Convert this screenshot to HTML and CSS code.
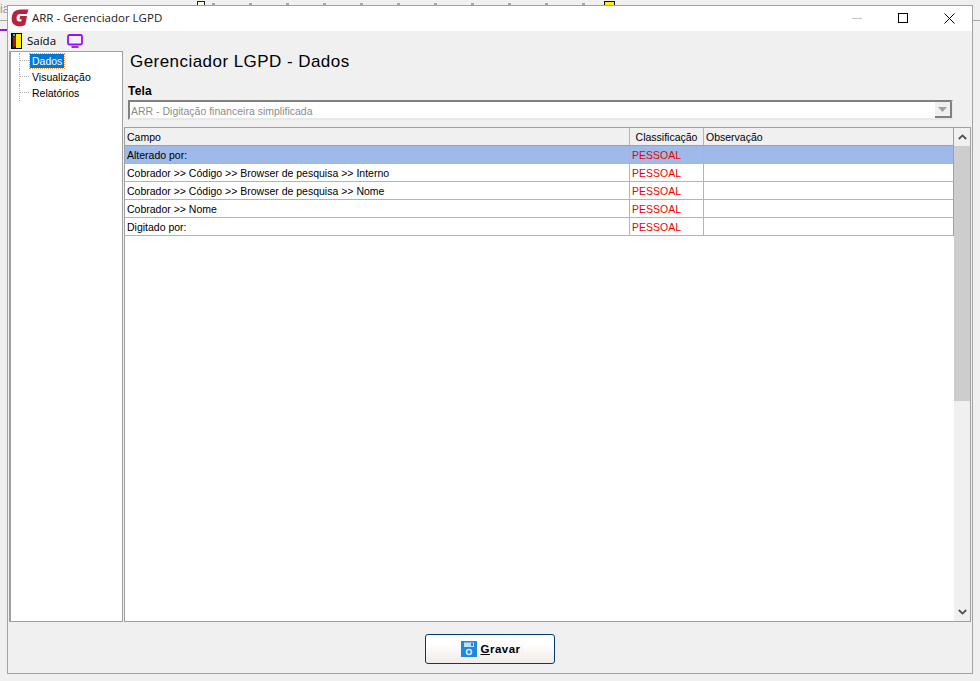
FILE: index.html
```html
<!DOCTYPE html>
<html lang="pt">
<head>
<meta charset="utf-8">
<title>ARR - Gerenciador LGPD</title>
<link rel="stylesheet" href="styles.css">
</head>
<body>
<div class="backdrop" aria-hidden="true">
  <span class="bg-text">ia</span>
  <span class="bg-line bg-line-l"></span>
  <span class="bg-line bg-line-r"></span>
  <span class="bg-purple"></span>
  <span class="bg-doc"></span>
  <span class="bg-door"></span>
  <span class="bg-strip"></span>
</div>
<main class="window">
  <header class="titlebar">
    <svg class="app-icon" viewBox="0 0 18 18" width="18" height="18">
      <path d="M9 .6H17.500L16 5H9.200Q6.200 5 5.600 8.200 5.200 12.400 8.400 12.600H10.200L10.700 10.200H8.400L9.200 7H16L14.300 15.800Q12 17.400 8.400 17.400 .4 17.200 .6 9 1 1 9 .6Z" fill="#b5233f"/>
    </svg>
    <span class="title">ARR - Gerenciador LGPD</span>
    <div class="win-controls">
      <span class="win-btn"><span class="win-min"></span></span>
      <span class="win-btn"><span class="win-max"></span></span>
      <span class="win-btn">
        <svg viewBox="0 0 11 11" width="11" height="11"><path d="M.5.5l10 10M10.5.5l-10 10" stroke="#000" stroke-width="1" fill="none"/></svg>
      </span>
    </div>
  </header>

  <div class="toolbar">
    <span class="tool">
      <svg class="door" viewBox="0 0 11 16" width="11" height="16">
        <rect x=".5" y=".5" width="10" height="15" fill="#ffee00" stroke="#000"/>
        <path d="M1 1h4v14H1z" fill="#151515"/>
        <path d="M2 4l3-1v10l-3 2z" fill="#a01818"/>
        <rect x="2" y="1" width="2" height="2" fill="#19c8e0"/>
      </svg>
      <span class="tool-label">Saída</span>
    </span>
    <svg class="monitor" viewBox="0 0 16 14" width="16" height="14">
      <rect x="1" y="1" width="14" height="9.500" rx="1.500" fill="#f4f0fa" stroke="#9a10e8" stroke-width="1.800"/>
      <path d="M4.500 13h7" stroke="#9a10e8" stroke-width="1.800"/>
    </svg>
  </div>

  <div class="content">
    <nav class="tree">
      <div class="tree-item"><span class="tree-dash"></span><span class="tree-label selected">Dados</span></div>
      <div class="tree-item"><span class="tree-dash"></span><span class="tree-label">Visualização</span></div>
      <div class="tree-item"><span class="tree-dash"></span><span class="tree-label">Relatórios</span></div>
    </nav>

    <section class="main">
      <h1 class="heading">Gerenciador LGPD - Dados</h1>
      <label class="field-label">Tela</label>
      <div class="combo">
        <span class="combo-text">ARR - Digitação financeira simplificada</span>
        <span class="combo-btn"><svg viewBox="0 0 9 5" width="9" height="5"><path d="M0 0h9L4.500 5z" fill="#a0a0a0"/></svg></span>
      </div>

      <div class="grid-wrap">
        <div class="grid">
          <div class="row head">
            <div class="cell c1">Campo</div>
            <div class="cell c2 center">Classificação</div>
            <div class="cell c3">Observação</div>
          </div>
          <div class="row active">
            <div class="cell c1">Alterado por:</div>
            <div class="cell c2 tag">PESSOAL</div>
            <div class="cell c3"></div>
          </div>
          <div class="row">
            <div class="cell c1">Cobrador &gt;&gt; Código &gt;&gt; Browser de pesquisa &gt;&gt; Interno</div>
            <div class="cell c2 tag">PESSOAL</div>
            <div class="cell c3"></div>
          </div>
          <div class="row">
            <div class="cell c1">Cobrador &gt;&gt; Código &gt;&gt; Browser de pesquisa &gt;&gt; Nome</div>
            <div class="cell c2 tag">PESSOAL</div>
            <div class="cell c3"></div>
          </div>
          <div class="row">
            <div class="cell c1">Cobrador &gt;&gt; Nome</div>
            <div class="cell c2 tag">PESSOAL</div>
            <div class="cell c3"></div>
          </div>
          <div class="row">
            <div class="cell c1">Digitado por:</div>
            <div class="cell c2 tag">PESSOAL</div>
            <div class="cell c3"></div>
          </div>
        </div>
        <div class="scrollbar">
          <span class="sb-arrow"><svg viewBox="0 0 9 6" width="9" height="6"><path d="M.8 5L4.500 1.400 8.200 5" fill="none" stroke="#505050" stroke-width="1.800"/></svg></span>
          <span class="sb-thumb"></span>
          <span class="sb-track"></span>
          <span class="sb-arrow"><svg viewBox="0 0 9 6" width="9" height="6"><path d="M.8 1L4.500 4.600 8.200 1" fill="none" stroke="#505050" stroke-width="1.800"/></svg></span>
        </div>
      </div>
    </section>
  </div>

  <footer class="footer">
    <button class="save" type="button">
      <svg viewBox="0 0 16 16" width="16" height="16">
        <path d="M0 0h16v16H0z" fill="#1e88e5"/>
        <rect x="3" y="1.500" width="10" height="4.500" fill="#bfe0fa"/>
        <rect x="10" y="2" width="2" height="3" fill="#1e88e5"/>
        <circle cx="8" cy="11" r="2.500" fill="none" stroke="#d4ebfc" stroke-width="1.600"/>
      </svg>
      <span class="save-label"><u>G</u>ravar</span>
    </button>
  </footer>
</main>
</body>
</html>
```
FILE: styles.css
```css
* { box-sizing: border-box; }

html, body { height: 100%; }

body {
  margin: 0;
  padding: 5px 7px 7px;
  background: #f0f0f0;
  font-family: "Liberation Sans", Arial, sans-serif;
  font-size: 10.500px;
  color: #000;
  overflow: hidden;
}

/* Fragments of the application behind the dialog */
.backdrop span { position: absolute; }
.bg-text { left: 0; top: 2px; font-size: 12px; color: #9a9a9a; }
.bg-line { top: 20px; height: 1px; background: #a6a6a6; }
.bg-line-l { left: 0; width: 7px; }
.bg-line-r { left: 973px; width: 7px; }
.bg-purple { left: 0; top: 29px; width: 7px; height: 2px; background: #9a10e8; }
.bg-doc { left: 197px; top: 1px; width: 8px; height: 5px; background: #fffde0; border: 1px solid #222; }
.bg-door { left: 604px; top: 1px; width: 11px; height: 5px; background: #ffee00; border: 1px solid #111; }
.bg-strip {
  left: 212px;
  top: 3px;
  width: 380px;
  height: 2px;
  background: repeating-linear-gradient(90deg, #a8a8a8 0 3px, transparent 3px 37px);
}

.window {
  position: relative;
  width: 966px;
  height: 669px;
  background: #f0f0f0;
  border: 1px solid #a3a3a3;
  display: flex;
  flex-direction: column;
}

.titlebar {
  height: 25px;
  flex: none;
  background: #fff;
  display: flex;
  align-items: center;
  padding: 0 0 1px 3px;
}

.app-icon { flex: none; }

.title {
  margin: -1px 0 0 3px;
  font-family: "Open Sans", "Liberation Sans", sans-serif;
  font-size: 11.500px;
  color: #1a1a1a;
  white-space: nowrap;
}

.win-controls { margin-left: auto; display: flex; align-items: center; height: 100%; }

.win-btn {
  width: 46px;
  height: 100%;
  display: flex;
  align-items: center;
  justify-content: center;
}

.win-min { width: 10px; height: 1px; background: #c4c4c4; }
.win-max { width: 10px; height: 10px; border: 1px solid #000; }

.toolbar {
  height: 20px;
  flex: none;
  display: flex;
  align-items: center;
  padding-left: 3px;
  gap: 11px;
}

.tool { display: flex; align-items: center; gap: 5px; font-family: "Open Sans", "Liberation Sans", sans-serif; font-size: 11.500px; }
.tool-label { margin-top: -1px; }

.content {
  flex: none;
  height: 571px;
  display: flex;
  padding: 0 1px 0 1px;
  gap: 1px;
}

.tree {
  width: 114px;
  flex: none;
  background: #fff;
  border: 1px solid #a0a0a0;
  border-left-width: 2px;
  padding: 1px 0 0 8px;
}

.tree-item { height: 16px; display: flex; align-items: center; }

.tree-dash {
  width: 10px;
  height: 16px;
  margin-right: 1px;
  flex: none;
  border-left: 1px dotted #b0b0b0;
  background: linear-gradient(to right, #b0b0b0 50%, transparent 50%) left 7px / 2px 1px repeat-x;
}

.tree-label { padding: 0 2px; line-height: 14px; }

.selected {
  background: #0078d7;
  color: #fff;
  outline: 1px dotted #ff9a3c;
}

.main {
  flex: 1;
  min-width: 0;
  display: flex;
  flex-direction: column;
}

.heading {
  margin: 0 0 0 6px;
  padding-top: 1px;
  height: 20px;
  font-family: "Liberation Sans", Arial, sans-serif;
  font-size: 17px;
  font-weight: 400;
  line-height: 20px;
  letter-spacing: .45px;
  white-space: nowrap;
}

.field-label {
  margin: 13px 0 0 4px;
  height: 16px;
  font-size: 12px;
  font-weight: 700;
  line-height: 14px;
  letter-spacing: .2px;
}

.combo {
  margin: 0 18px 0 4px;
  height: 20px;
  flex: none;
  background: #fff;
  border: 2px solid #808080;
  border-right-color: #e8e8e8;
  border-bottom-color: #e8e8e8;
  display: flex;
  align-items: center;
  justify-content: space-between;
  color: #8c8c8c;
}

.combo-text { padding: 1px 0 0 1px; }

.combo-btn {
  width: 17px;
  height: 16px;
  margin-right: -1px;
  background: #f0f0f0;
  border-right: 2px solid #808080;
  border-bottom: 2px solid #808080;
  display: flex;
  align-items: center;
  justify-content: center;
}

.grid-wrap {
  margin-top: 7px;
  flex: 1;
  min-height: 0;
  display: flex;
  background: #fff;
  border: 1px solid #a0a0a0;
}

.grid { flex: 1; min-width: 0; }

.row {
  height: 18px;
  display: flex;
  border-bottom: 1px solid #b4b4b4;
  border-right: 1px solid #a0a0a0;
}

.head { background: #f0f0f0; border-bottom-color: #a0a0a0; }
.active { background: #9fb9e8; }

.cell {
  height: 100%;
  padding-left: 2px;
  line-height: 19px;
  white-space: nowrap;
  overflow: hidden;
}

.c1 { width: 505px; border-right: 1px solid #b4b4b4; }
.c2 { width: 74px; border-right: 1px solid #b4b4b4; }
.c3 { flex: 1; }
.center { text-align: center; padding-left: 0; }
.tag { color: #f00000; font-size: 10.500px; }

.scrollbar {
  width: 16px;
  flex: none;
  display: flex;
  flex-direction: column;
  background: #f0f0f0;
}

.sb-arrow { height: 18px; flex: none; display: flex; align-items: center; justify-content: center; }
.sb-thumb { height: 255px; flex: none; background: #cdcdcd; }
.sb-track { flex: 1; }

.footer {
  flex: 1;
  display: flex;
  justify-content: center;
  align-items: flex-start;
  padding-top: 12px;
}

.save {
  width: 130px;
  height: 30px;
  border: 1px solid #003c74;
  border-radius: 3px;
  background: linear-gradient(#ffffff 30%, #f0ebe6);
  display: flex;
  align-items: center;
  justify-content: center;
  gap: 3px;
  padding: 0 0 1px 2px;
  font-family: "Liberation Sans", Arial, sans-serif;
  font-size: 11.500px;
  font-weight: 700;
  letter-spacing: .5px;
  color: #000;
}
```
